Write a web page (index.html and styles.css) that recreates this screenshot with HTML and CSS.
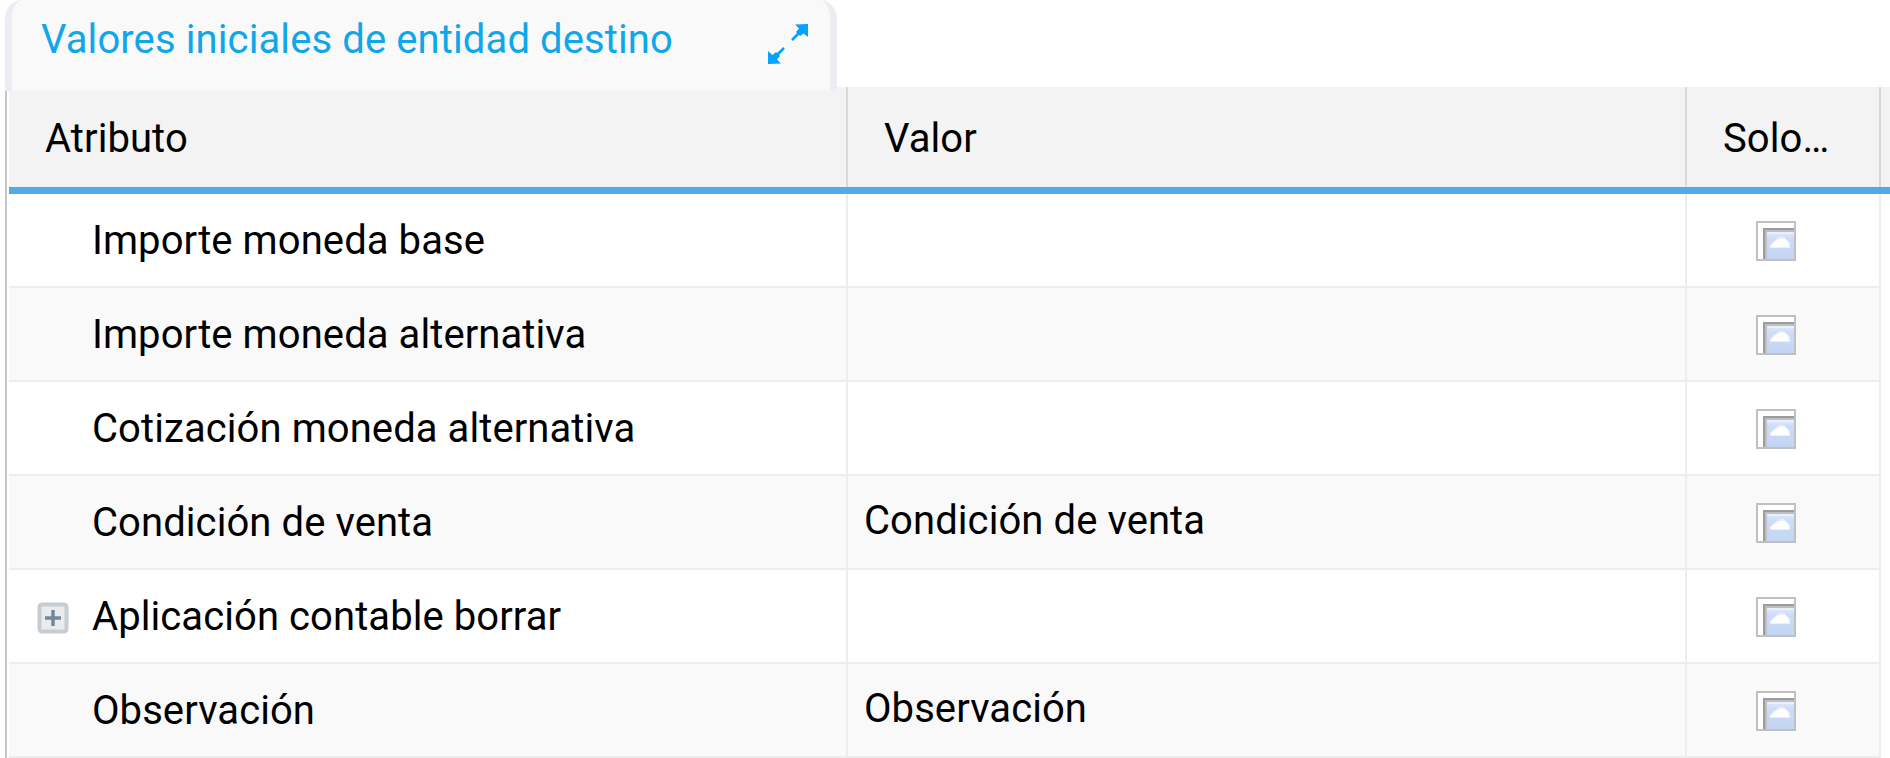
FILE: index.html
```html
<!DOCTYPE html>
<html lang="es">
<head>
<meta charset="utf-8">
<title>Valores iniciales de entidad destino</title>
<link rel="stylesheet" href="styles.css">
</head>
<body>
<svg class="defs" width="0" height="0">
  <defs>
    <linearGradient id="sky" x1="0" y1="0" x2="0" y2="1">
      <stop offset="0" stop-color="#dfe9fb"/><stop offset=".25" stop-color="#cddcf6"/><stop offset="1" stop-color="#c2d5f2"/>
    </linearGradient>
    <symbol id="check" viewBox="0 0 40 40">
      <rect x="1" y="1" width="38" height="38" fill="#fff" stroke="#c0c0c0" stroke-width="2"/>
      <path d="M7 38V7H38V11H11V38Z" fill="#bdbfc4"/>
      <path d="M7 38V7H38V9H9V38Z" fill="#9c9c9c"/>
      <rect x="11" y="11" width="27" height="27" fill="url(#sky)"/>
      <path d="M11 11H38V13H11Z" fill="#eaf0fb"/>
      <path d="M14 27V24L18 20L22 17L24 16H28L31 19L34 22V27Z" fill="#e9f0fb"/>
      <path d="M15 26V24L19 21L23 18H29L32 21L33 26Z" fill="#fff"/>
    </symbol>
  </defs>
</svg>
<main class="panel">
  <header class="tab">
    <span class="tab-title">Valores iniciales de entidad destino</span>
    <svg class="expand" viewBox="0 0 42 42" width="42" height="42">
      <g fill="#03a3ff"><path d="M28 1.500L41 1V14L36.500 10.500L33 13L29 9L32 5.500Z"/><path d="M1 28L5.500 32L9 29L13 33L10 36.500L14 40.500L1 41Z"/></g>
      <path d="M25 17L35 7M17 25L7 35" stroke="#03a3ff" stroke-width="2.600"/>
    </svg>
  </header>
  <section class="grid">
    <div class="row head">
      <div class="cell">Atributo</div><div class="cell">Valor</div><div class="cell">Solo…</div>
    </div>
    <div class="row"><div class="cell name">Importe moneda base</div><div class="cell value"></div><div class="cell only"><svg class="check"><use href="#check"/></svg></div></div>
    <div class="row"><div class="cell name">Importe moneda alternativa</div><div class="cell value"></div><div class="cell only"><svg class="check"><use href="#check"/></svg></div></div>
    <div class="row"><div class="cell name">Cotización moneda alternativa</div><div class="cell value"></div><div class="cell only"><svg class="check"><use href="#check"/></svg></div></div>
    <div class="row"><div class="cell name">Condición de venta</div><div class="cell value">Condición de venta</div><div class="cell only"><svg class="check"><use href="#check"/></svg></div></div>
    <div class="row"><div class="cell name parent"><svg class="plus" viewBox="0 0 32 32"><rect x="2.500" y="2.500" width="27" height="27" rx="2.500" fill="#e8ecef" stroke="#c5cdd3" stroke-width="4"/><path d="M16 8V24M8 16H24" stroke="#758896" stroke-width="3.500"/></svg>Aplicación contable borrar</div><div class="cell value"></div><div class="cell only"><svg class="check"><use href="#check"/></svg></div></div>
    <div class="row"><div class="cell name">Observación</div><div class="cell value">Observación</div><div class="cell only"><svg class="check"><use href="#check"/></svg></div></div>
  </section>
</main>
</body>
</html>
```
FILE: styles.css
```css
* { box-sizing: border-box; }
body {
  margin: 0;
  background: #fff;
  color: #000;
  font-family: Roboto, "Liberation Sans", sans-serif;
  font-size: 40px;
  letter-spacing: .08px;
  overflow: hidden;
}
.defs { display: block; }
.panel { height: 758px; padding-left: 5px; overflow: hidden; }

.tab {
  position: relative;
  z-index: 1;
  display: flex;
  justify-content: space-between;
  width: 832px;
  height: 91px;
  padding: 0 21px 0 29px;
  border: solid #ecedf2;
  border-width: 0 7px;
  border-radius: 18px 18px 0 0;
  background: #f9f9f9;
  color: #10a6ea;
}
.tab-title { line-height: 79px; letter-spacing: .11px; white-space: nowrap; }
.expand { margin-top: 23px; }

.grid {
  margin-top: -4px;
  padding-left: 4px;
  background: linear-gradient(#c6c6c6, #c6c6c6) 0 4px / 2px 100% no-repeat;
}
.row {
  display: grid;
  grid-template-columns: 839px 839px 194px;
  width: 1872px;
  height: 94px;
}
.row:nth-child(odd) { background: #f9f9f9; }
.cell {
  display: flex;
  align-items: center;
  border-right: 2px solid #ededed;
  border-bottom: 2px solid #ededed;
  white-space: nowrap;
}
.row.head {
  width: auto;
  height: 107px;
  background: #f3f3f3;
  border-bottom: 7px solid #51abe6;
}
.head .cell { padding: 2px 0 0 36px; border-bottom: 0; border-color: #d9d9d9; }
.name { padding-left: 83px; }
.name.parent { padding-left: 28px; }
.value { padding: 0 0 4px 16px; }
.only { justify-content: center; padding: 2px 14px 0 0; }
.check { width: 40px; height: 40px; }
.plus { width: 32px; height: 32px; margin: 4px 23px 0 0; }
```
